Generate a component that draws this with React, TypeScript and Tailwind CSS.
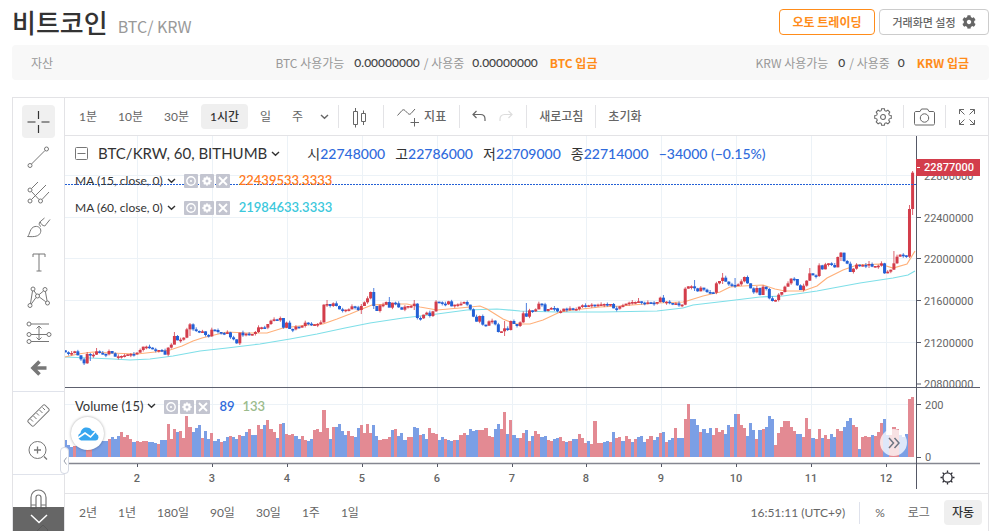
import React, { useState } from "react";
import { FaCog } from "react-icons/fa";

const RED = "#d33d4b";
const BLUE = "#2360d6";

// chart geometry
const FIRST_X = 65.4;
const LAST_X = 912.6;
const VOLUME_BASE = 457;

const barX = (i: number, count: number) => FIRST_X + (i * (LAST_X - FIRST_X)) / (count - 1);

const trace = (top: number, values: string) =>
  values.trim().split(/\s+/).map((v) => top + Number(v) / 3);

const closes = [
  ...trace(
    270,
    `247 250 249 244 256 268 280 252 254 254 244 249 252 253 243 250 260 259 258 256 253 252 253 248
    240 230 230 233 238 240 240 242 254 233 224 198 211 209 203 178 163 178 183 185 184 195 199 179
    180 186 189 190 187 202 208 220 188 196 191 193 192 186 172 172 173 162 152 148 151 144 173 158
    177 178 170 171 168 158 161 166 163 162 157 104 102 108 100 108 118 119 119 118 109 112 120 108
    97 85 66 108 123 106`
  ),
  ...trace(
    260,
    `134 126 143 128 130 142 149 140 138 138 131 174 175 164 158 168 154 125 127 131 133 124 139 134
    133 131 126 134 148 170 185 168 194 197 184 182 193 216 214 205 210 183 192 198 187 160 170 151
    154 148 131 133 153 147 144 145 154 154 146 148 145 148 147 140 136 137 136 134 135 134 133 132
    134 132 145 146 139 136 131 128 126 126 124 128 129 127 128 129 126 113 126 125 129 132 130 136
    134 86`
  ),
  ...trace(
    220,
    `199 199 205 214 203 209 216 217 218 190 183 173 185 193 195 198 193 184 171 190 205 217 204 225
    200 207 235 243 240 224 216 200 190 176 177 196 210 197 182 160 166 168 136 148 133 130 135 142
    111 98 123 131 156 146 134 138 135 136 132 140 138 137 130 160 155 149 130 110 104 106 110 -33
    -142`
  ),
];

// long wicks: [x, high, low]
const wicks = [
  [84, 358, 365], [90, 353, 361], [97, 348, 355], [175, 332, 344], [190, 323, 336], [240, 333, 345],
  [327, 300, 307], [361, 304, 314], [373, 288, 309], [389, 297, 306], [413, 300, 310], [504, 321, 336],
  [526, 303, 317], [640, 298, 303], [663, 295, 303], [695, 280, 291], [722, 273, 284], [735, 278, 288],
  [810, 268, 281], [841, 252, 261], [869, 261, 268], [894, 251, 270], [909.4, 205, 258], [912.6, 171, 215],
];

const volumes = `166b 180b 185b 184r 170b 165b 160b 160r 158r 165b 165b 168b 168b 168b 163r 156b 163b 153b
  141r 156r 150r 163r 171b 168r 171r 168r 168r 171b 171b 174b 178r 165b 165b 118r 163r 133r 141b 138r
  158r 92r 125r 141b 128b 121b 160r 139b 163b 145r 168b 163b 171r 168b 156b 153r 156b 161b 150r 153b
  141b 133r 150b 150b 121r 133r 121b 104r 133r 141r 160b 118r 115b 148r 150r 148r 153b 163b 153r 165r
  168b 163b 136r 133r 141r 75r 130r 163b 125r 126b 118b 138b 150b 138r 153r 156b 130b 121r 145r 118r
  145r 121b 153b 165r 163r 163r 156r 136b 133r 153b 145b 165b 156r 156r 125b 130b 150r 148b 163b 130r
  143r 148r 165b 156b 163r 165b 168b 165r 165b 150r 145r 150b 133b 138b 135b 135r 136r 130r 153r 156r
  133b 116b 133r 80r 148b 106r 150b 158b 158r 145r 136b 168r 153b 139r 148r 156b 153b 165r 168r 163b
  160b 156r 168r 171b 168r 163b 163b 148r 160r 174r 168b 178r 109r 174r 174r 171b 168b 171r 142b 158r
  156r 168b 153r 163r 171b 163r 156b 153b 171b 163r 153r 165b 156b 145r 142b 171r 165b 160b 130r 158b
  158b 101r 57r 103b 103b 119b 142r 133b 145b 130b 150r 130r 142r 136r 148b 119b 127r 86b 86r 121r
  130r 153b 113b 136b 163r 136b 133r 127b 92b 101b 180r 145r 125r 109r 109r 127r 139r 148b 146b 156r
  98r 133r 160b 163r 133r 160b 150r 163r 148b 156b 133r 139r 125b 107b 98b 121r 125r 192b 156r 154r
  156r 150b 154r 142r 113r 101b 150b 150r 127r 133r 150b 156b 148b 42r 36r`
  .split(/\s+/)
  .map((v) => ({ top: 385 + parseInt(v) / 3, up: v.endsWith("r") }));

const ma15 =
  "65,357 78,354 93,352 110,353 137,354 155,352 170,350 182,346 193,341 202,338 210,336 227,332 247,333 267,333 283,328 307,325 323,324 337,319 350,314 362,309 372,305 390,304 407,304 420,307 437,310 460,308 480,306 487,309 503,319 510,322 517,324 530,324 543,320 560,312 573,310 600,307 620,306 657,303 683,302 687,301 703,296 720,292 730,287 743,286 763,285 775,289 785,291 803,291 817,286 827,278 843,270 857,265 880,264 893,268 907,264 915,251";
const ma60 =
  "65,357 90,358 113,359 130,360 150,359 173,356 200,351 227,348 260,344 290,339 317,334 345,328 370,323 403,318 437,314 467,310 497,309 520,311 557,312 603,312 657,311 683,308 693,305 727,301 760,297 783,296 817,291 833,288 860,283 893,278 908,275 915,271";

const days = [2, 3, 4, 5, 6, 7, 8, 9, 10, 11, 12].map((d, i) => ({ label: d, x: Math.round(137 + i * 74.9) + 0.5 }));

const prices = [
  { label: "22800000", y: 175.5 },
  { label: "22400000", y: 217.5 },
  { label: "22000000", y: 258.5 },
  { label: "21600000", y: 300.5 },
  { label: "21200000", y: 342.5 },
  { label: "20800000", y: 384 },
];

function PriceChart() {
  return (
    <svg viewBox="65 136 923 357" className="block h-auto w-full" role="img" aria-label="BTC/KRW">
      <g stroke="#ecf2f7">
        {days.map((d) => (
          <line key={d.label} x1={d.x} x2={d.x} y1={136} y2={457} />
        ))}
        {prices.slice(0, 5).map((p) => (
          <line key={p.label} x1={65} x2={916} y1={p.y} y2={p.y} />
        ))}
        <line x1={65} x2={916} y1={404.5} y2={404.5} />
      </g>

      {/* volume */}
      <g shapeRendering="crispEdges">
        {volumes.map((v, i) => {
          const left = Math.max(65, Math.round(barX(i, volumes.length) - 1.5));
          const right = Math.round(barX(i + 1, volumes.length) - 1.5);
          return (
            <rect
              key={i}
              x={left}
              y={v.top}
              width={right - left}
              height={VOLUME_BASE - v.top}
              fill={v.up ? "#e38a93" : "#7b9fe5"}
            />
          );
        })}
      </g>

      <polyline points={ma60} fill="none" stroke="#7fdfe8" strokeWidth="1.2" />
      <polyline points={ma15} fill="none" stroke="#ffb07a" strokeWidth="1.2" />

      {/* candles */}
      {closes.map((close, i) => {
        const x = barX(i, closes.length);
        const open = i === 0 ? close - 2 : closes[i - 1];
        const color = close <= open ? RED : BLUE;
        const top = Math.min(open, close);
        const height = Math.max(1.6, Math.abs(open - close));
        const wick = wicks.find((w) => Math.abs(w[0] - x) < 1.55);
        const high = wick ? Math.min(wick[1], top) : top - ((i * 7) % 5) * 0.5;
        const low = wick ? wick[2] : top + height + ((i * 11) % 4) * 0.5;
        return (
          <g key={i} fill={color}>
            <rect x={x - 0.5} y={high} width={1} height={Math.max(0, low - high)} opacity={0.8} />
            <rect x={x - 1.5} y={top} width={3} height={height} />
          </g>
        );
      })}

      <line x1={65} x2={916} y1={184.5} y2={184.5} stroke={BLUE} strokeDasharray="2 1" />

      {/* axes */}
      <path d="M65 387.5H980" stroke="#5d606e" />
      <path d="M65 463.5H980" stroke="#858791" strokeWidth="1.4" />
      <path d="M916.5 136V489" stroke="#555866" />
      <g fontFamily="Roboto, sans-serif" fontSize="11" fill="#666">
        <clipPath id="price-pane">
          <rect x={917} y={136} width={70} height={251} />
        </clipPath>
        <g clipPath="url(#price-pane)">
          {prices.map((p) => (
            <g key={p.label}>
              <path d={`M917 ${p.y}h4`} stroke="#555866" />
              <text x={924} y={p.y + 4}>{p.label}</text>
            </g>
          ))}
        </g>
        <path d="M917 404.5h4M917 457.5h4" stroke="#555866" />
        <text x={925} y={409}>200</text>
        <text x={925} y={461}>0</text>
        {days.map((d) => (
          <g key={d.label}>
            <path d={`M${d.x} 464v3`} stroke="#555866" />
            <text x={d.x - 0.5} y={482} textAnchor="middle" fontWeight="500">{d.label}</text>
          </g>
        ))}
        <rect x={916} y={159} width={64} height={17} fill={RED} />
        <path d="M917 167.5h3" stroke="#fff" />
        <text x={924} y={171} fill="#fff" fontWeight="500">22877000</text>
      </g>

      {/* axis settings */}
      <g stroke="#2b2b33" fill="none" strokeWidth="1.3">
        <circle cx={947.5} cy={477.5} r={4.6} />
        <path d="M947.5 470.5v2M947.5 482.5v2M940.5 477.5h2M952.5 477.5h2M942.6 472.6l1.4 1.4M951 481l1.4 1.4M942.6 482.4l1.4-1.4M951 474l1.4-1.4" />
      </g>
    </svg>
  );
}

function Icon({ children, size = 28 }: { children: React.ReactNode; size?: number }) {
  return (
    <svg width={size} height={size} viewBox={`0 0 ${size} ${size}`} fill="none" stroke="currentColor" aria-hidden="true">
      {children}
    </svg>
  );
}

function Chevron({ className = "" }: { className?: string }) {
  return (
    <svg width="9" height="6" viewBox="0 0 9 6" fill="none" stroke="currentColor" strokeWidth="1.4" className={className} aria-hidden="true">
      <path d="M1 1l3.5 3.3L8 1" />
    </svg>
  );
}

const gearPath =
  "M8.4 1.5h3.2l.5 2.3 1.5.6 2-1.2 2.2 2.2-1.2 2 .6 1.5 2.3.5v3.2l-2.3.5-.6 1.5 1.2 2-2.2 2.2-2-1.2-1.5.6-.5 2.3H8.4l-.5-2.3-1.5-.6-2 1.2-2.2-2.2 1.2-2-.6-1.5-2.3-.5V9.4l2.3-.5.6-1.5-1.2-2 2.2-2.2 2 1.2 1.5-.6z";

const drawTools = [
  {
    name: "추세선",
    icon: <><circle cx="5" cy="22.500" r="2" /><circle cx="21.500" cy="6" r="2" /><path d="M6.500 21L20 7.500" /></>,
  },
  {
    name: "피치포크",
    icon: <><circle cx="5" cy="12" r="2" /><circle cx="5" cy="23" r="2" /><circle cx="15.500" cy="23" r="2" /><path d="M6.500 10.500L13 4M6.500 21.500L21 7M17 21.500l7-7.500M6.500 13.500l7.500 8" /></>,
  },
  {
    name: "브러시",
    icon: <><path d="M2.500 23.500c2.500-1.500 2-9 7.500-10 4-.7 6.800 2.500 5.500 6-1.500 4-6 4.500-13 4z" /><path d="M16 13.500c-2-1-2.500-3-.8-4.800M15.200 8.700c1 2.800 2 3.800 4.600 4.300L25 6.500M15.200 8.700L19.500 5" /></>,
  },
  {
    name: "텍스트",
    icon: <path d="M8 9V6h12v3M14 6v17M11.500 23h5" />,
  },
  {
    name: "패턴",
    icon: <><circle cx="8" cy="6" r="2" /><circle cx="20" cy="6.500" r="2" /><circle cx="5" cy="22.500" r="2" /><circle cx="22.500" cy="20" r="2" /><circle cx="12.500" cy="13" r="2" /><path d="M7.500 8L5.500 20.500M9 7.800l2.500 3.500M18.500 8L14 11.700M20.400 8.500l1.700 9.500M14.300 14l6.500 4.800M11 14.500l-4.700 6.500" /></>,
  },
  {
    name: "예측 도구",
    icon: <><circle cx="4" cy="6" r="2" /><circle cx="4" cy="16.500" r="2" /><circle cx="24" cy="16.500" r="2" /><circle cx="4" cy="23.500" r="2" /><path d="M6 6h18M6 16.500h16M6 23.500h18M14 8v14M11.500 10.500L14 8l2.500 2.500M11.500 19.500L14 22l2.500-2.500" /></>,
  },
];

const legendIcons = [
  { name: "숨기기", icon: <><circle cx="7" cy="7" r="4.200" /><circle cx="7" cy="7" r="1" fill="#fff" stroke="none" /></> },
  { name: "설정", icon: <><circle cx="7" cy="7" r="2.600" strokeWidth="2.200" /><path d="M7 2.200v2M7 9.800v2M2.200 7h2M9.800 7h2M3.800 3.800l1 1M9.200 9.200l1 1M3.800 10.200l1-1M9.200 4.800l1-1" /></> },
  { name: "삭제", icon: <path d="M3 3l8 8M11 3l-8 8" strokeWidth="1.800" /> },
];

function LegendRow({ title, children }: { title: React.ReactNode; children: React.ReactNode }) {
  return (
    <div className="flex h-[27px] items-center">
      <button className="flex items-center gap-1 text-xs text-[#333]">
        {title}
        <Chevron />
      </button>
      <div className="ml-2 mr-[9px] flex gap-[2px]">
        {legendIcons.map((l) => (
          <button key={l.name} aria-label={l.name} className="size-[14px] rounded-[1px] bg-[#c3c5d0]">
            <svg width="14" height="14" viewBox="0 0 14 14" fill="none" stroke="#fff" strokeWidth="1.400">{l.icon}</svg>
          </button>
        ))}
      </div>
      {children}
    </div>
  );
}

function Divider() {
  return <span className="h-[23px] w-px shrink-0 bg-[#e3e3e6]" />;
}

export default function App() {
  const [interval, setInterval] = useState("1시간");
  const intervals = ["1분", "10분", "30분", "1시간", "일", "주"];
  const ranges = ["2년", "1년", "180일", "90일", "30일", "1주", "1일"];
  const ohlc = [
    ["시", "22748000"],
    ["고", "22786000"],
    ["저", "22709000"],
    ["종", "22714000"],
  ];

  return (
    <main className="bg-white pl-3 pr-[11px] font-['Noto_Sans_CJK_KR',sans-serif] text-[#666]">
      {/* HEADER */}
      <header className="flex h-[45px] items-start justify-between pt-[9px]">
        <h1 className="flex items-baseline gap-[10px] text-[26px] font-medium leading-[26px] text-[#333]">
          비트코인
          <span className="text-base font-normal text-[#999]">BTC/ KRW</span>
        </h1>
        <div className="flex gap-1 text-xs">
          <button className="h-[26px] w-24 rounded border border-[#ff8c1a] font-bold text-[#ff8c1a]">
            오토 트레이딩
          </button>
          <button className="flex h-[26px] w-[110px] items-center justify-center gap-[6px] rounded border border-[#ccc] text-[11px] font-medium">
            거래화면 설정
            <FaCog className="text-sm" />
          </button>
        </div>
      </header>

      {/* ASSETS */}
      <section className="flex h-[35px] items-center rounded bg-[#f8f8f8] pl-[19px] pr-5 pt-px text-xs text-[#999]">
        <span>자산</span>
        <div className="ml-auto flex items-center">
          <span>BTC 사용가능</span>
          <span className="ml-[10px] font-[Lato,sans-serif] font-medium text-[#444]">0.00000000</span>
          <span className="ml-1">/ 사용중</span>
          <span className="ml-2 font-[Lato,sans-serif] font-medium text-[#444]">0.00000000</span>
          <a href="#btc" className="ml-3 font-bold text-[#ff8c1a]">BTC 입금</a>
        </div>
        <div className="ml-[158px] flex items-center">
          <span>KRW 사용가능</span>
          <span className="ml-[10px] font-[Lato,sans-serif] font-medium text-[#444]">0</span>
          <span className="ml-1">/ 사용중</span>
          <span className="ml-2 font-[Lato,sans-serif] font-medium text-[#444]">0</span>
          <a href="#krw" className="ml-3 font-bold text-[#ff8c1a]">KRW 입금</a>
        </div>
      </section>

      {/* CHART */}
      <section className="mt-[17px] flex border border-b-0 border-[#e3e3e6] font-[Lato,'Noto_Sans_CJK_KR',sans-serif]">
        <aside className="relative w-[52px] shrink-0 overflow-hidden border-r border-[#e3e3e6] text-[#777] [contain:size]">
          <div className="flex flex-col items-center border-b border-[#e0e3eb] pb-[7px] pt-[6px]">
            <button aria-label="십자선" className="my-px flex size-[33px] items-center justify-center rounded bg-[#f0f0f0] text-[#333]">
              <Icon>
                <path d="M13.500 3v8M13.500 17v8M2.500 14h8M16.500 14h8" strokeWidth="1.200" />
              </Icon>
            </button>
            {drawTools.map((t) => (
              <button key={t.name} aria-label={t.name} className="flex h-[35px] items-center">
                <Icon>{t.icon}</Icon>
              </button>
            ))}
            <button aria-label="뒤로" className="flex h-[35px] items-center">
              <Icon>
                <path d="M21.500 15H8.500M14.500 8.500L8 15l6.500 6.500" strokeWidth="3.600" />
              </Icon>
            </button>
          </div>
          <div className="flex flex-col items-center border-b border-[#e0e3eb] py-[6px]">
            <button aria-label="측정" className="flex h-[35px] items-center">
              <Icon>
                <rect x="1.500" y="9.500" width="24" height="8" rx="1.500" transform="rotate(-45 13.5 13.5)" />
                <path d="M5.500 17l2.500 2.500M8.500 14l3 3M11.500 11l2.500 2.500M14.500 8l3 3M17.500 5.500L20 8" />
              </Icon>
            </button>
            <button aria-label="확대" className="flex h-[35px] items-center">
              <Icon>
                <circle cx="12.500" cy="13" r="8.500" />
                <path d="M19 19.500l3 3M12.500 9.500v7M9 13h7" strokeWidth="1.300" />
              </Icon>
            </button>
          </div>
          <div className="flex flex-col items-center py-[6px]">
            <button aria-label="자석" className="flex h-[35px] items-center">
              <Icon>
                <path d="M6 23.500V12.500a7.500 7.500 0 0 1 15 0v11h-5V12.500a2.500 2.500 0 0 0-5 0v11zM6 20h5M16 20h5" strokeWidth="1.200" />
              </Icon>
            </button>
            <button aria-label="그리기 유지" className="flex h-[35px] items-center">
              <Icon>
                <path d="M4 24l2-7L18 5l5 5-12 12z" />
              </Icon>
            </button>
          </div>
          <button aria-label="더 보기" className="absolute inset-x-0 bottom-0 flex h-6 items-center justify-center bg-[#555]/90 text-white">
            <svg width="18" height="10" viewBox="0 0 18 10" fill="none" stroke="currentColor" strokeWidth="1.500"><path d="M1 1l8 7.500L17 1" /></svg>
          </button>
        </aside>

        <div className="relative min-w-0 flex-1">
          <nav className="flex h-[38px] items-center border-b border-[#e3e3e6] pl-[5px] pr-[9px] text-xs">
            <div className="flex items-center gap-[3px]">
              {intervals.map((t) => (
                <button
                  key={t}
                  onClick={() => setInterval(t)}
                  className={`h-[25px] rounded-sm px-[9px] ${t === interval ? "bg-[#efefef] font-medium text-[#333]" : ""}`}
                >
                  {t}
                </button>
              ))}
              <button aria-label="시간 간격" className="px-[5px]"><Chevron /></button>
            </div>
            <span className="w-1" />
            <Divider />
            <button aria-label="차트 종류" className="px-[10px]">
              <Icon size={24}>
                <path d="M4.500 6.500h4v13h-4zM6.500 3v3.500M6.500 19.500v3M12.500 8.500h4v8h-4zM14.500 5.500v3M14.500 16.500v3.500" />
              </Icon>
            </button>
            <Divider />
            <button className="flex items-center gap-[5px] px-[13px]">
              <svg width="22" height="20" viewBox="0 0 22 20" fill="none" stroke="currentColor" aria-hidden="true">
                <path d="M.5 8.500l4.500-5c1-1 2-1 3 0l3 3c1 1 2 1 3 0l4-4.500M17.500 11v8.500M13.500 15.500H22" />
              </svg>
              <span className="font-medium">지표</span>
            </button>
            <Divider />
            <button aria-label="실행 취소" className="pl-3 pr-[7px]">
              <svg width="14" height="14" viewBox="0 0 14 14" fill="none" stroke="currentColor" strokeWidth="1.200"><path d="M4.500 1L1 4.500 4.500 8M1 4.500h7.500c3 0 4.500 2 4.500 4.500v2" /></svg>
            </button>
            <button aria-label="다시 실행" className="pl-[6px] pr-[13px] text-[#ddd]">
              <svg width="14" height="14" viewBox="0 0 14 14" fill="none" stroke="currentColor" strokeWidth="1.200"><path d="M9.500 1L13 4.500 9.500 8M13 4.500H5.500C2.500 4.500 1 6.500 1 9v2" /></svg>
            </button>
            <Divider />
            <button className="px-3 font-medium">새로고침</button>
            <Divider />
            <button className="px-3 font-medium">초기화</button>
            <div className="ml-auto flex items-center">
              <button aria-label="설정" className="px-[10px]">
                <svg width="20" height="20" viewBox="-.5 -.5 21 23" fill="none" stroke="currentColor" strokeWidth="1.200"><path d={gearPath} /><circle cx="10" cy="11" r="2.800" /></svg>
              </button>
              <Divider />
              <button aria-label="스냅샷" className="px-[10px]">
                <svg width="21" height="18" viewBox="0 0 21 18" fill="none" stroke="currentColor"><path d="M2 3.500h4l1.500-2.500h6L15 3.500h4c1 0 1.500.5 1.500 1.500v10.500c0 1-.5 1.500-1.500 1.500H2C1 17 .5 16.500.5 15.500V5C.5 4 1 3.500 2 3.500z" /><circle cx="10.500" cy="10" r="4.200" /></svg>
              </button>
              <Divider />
              <button aria-label="전체 화면" className="pl-3 pr-[3px]">
                <svg width="18" height="18" viewBox="0 0 18 18" fill="none" stroke="currentColor"><path d="M1.500 6V1.500H6M1.500 1.500L6.500 6.500M12 1.500h4.500V6M16.500 1.500L11.500 6.500M1.500 12v4.500H6M1.500 16.500L6.500 11.500M12 16.500h4.500V12M16.500 16.500L11.500 11.500" /></svg>
              </button>
            </div>
          </nav>

          <div className="relative">
            <PriceChart />

            <div className="absolute left-[10px] top-1">
              <div className="flex h-[27px] items-center">
                <button className="flex items-center gap-1 text-[15px] text-[#333]">
                  <svg width="13" height="13" viewBox="0 0 13 13" fill="none" stroke="#777" className="mr-[6px]"><rect x=".5" y=".5" width="12" height="12" rx="1" /><path d="M2.500 6.500h8" /></svg>
                  BTC/KRW, 60, BITHUMB
                  <Chevron />
                </button>
                <div className="ml-[27px] flex gap-[10px] text-sm font-medium text-[#2f6bdc]">
                  {ohlc.map(([label, value]) => (
                    <span key={label}>
                      <span className="font-normal text-[#333]">{label}</span>
                      {value}
                    </span>
                  ))}
                  <span>−34000 (−0.15%)</span>
                </div>
              </div>
              <LegendRow title="MA (15, close, 0)">
                <span className="text-[13px] font-semibold text-[#ff7b1f]">22439533.3333</span>
              </LegendRow>
              <LegendRow title="MA (60, close, 0)">
                <span className="text-[13px] font-semibold text-[#3cc8dc]">21984633.3333</span>
              </LegendRow>
            </div>

            <div className="absolute bottom-[73px] left-[10px]">
              <LegendRow title={<span className="text-[13px]">Volume (15)</span>}>
                <span className="text-[13px] font-semibold text-[#2f6bdc]">89</span>
                <span className="ml-2 text-[13px] font-semibold text-[#9bbb8c]">133</span>
              </LegendRow>
            </div>

            <a href="#chart" aria-label="차트 제공" className="absolute bottom-[43px] left-[6px] flex size-[33px] items-center justify-center rounded-full bg-white shadow-[0_0_3px_rgba(0,0,0,0.35)]">
              <svg width="22" height="14" viewBox="0 0 22 14" aria-hidden="true">
                <path d="M4 13.500A4 4 0 0 1 3.500 6C4 2.500 6.500.5 9.500.5c2.500 0 4.300 1 5.500 3.200 2.500-.2 4.200 1.300 4.500 3.300a3.400 3.400 0 0 1-1 6.500z" fill="#37a6ef" />
                <path d="M1 11l7-5 5.500 4 5.500-6" fill="none" stroke="#fff" strokeWidth="1.600" />
              </svg>
            </a>
            <button aria-label="최신으로" className="absolute bottom-[37px] right-[81px] flex size-[27px] items-center justify-center rounded-full bg-white/75 text-[#6e7683]">
              <svg width="12" height="12" viewBox="0 0 12 12" fill="none" stroke="currentColor" strokeWidth="1.500"><path d="M1 1l4.500 5L1 11M6.500 1L11 6l-4.500 5" /></svg>
            </button>
            <button aria-label="도구 숨기기" className="absolute -left-[5px] bottom-[19px] flex h-[27px] w-[9px] items-center justify-center rounded border border-[#d5d9e4] bg-white text-[#9aa0ad]">
              <svg width="4" height="8" viewBox="0 0 4 8" fill="none" stroke="currentColor"><path d="M3.500.5L1 4l2.500 3.500" /></svg>
            </button>
          </div>

          <footer className="flex h-[38px] items-center border-t border-[#e3e3e6] pl-[14px] pr-[6px] text-xs">
            <div className="flex gap-[21px]">
              {ranges.map((r) => (
                <button key={r}>{r}</button>
              ))}
            </div>
            <span className="ml-auto mr-[14px]">16:51:11 (UTC+9)</span>
            <span className="h-[22px] w-px bg-[#dfe2ec]" />
            <button className="px-[15px]">%</button>
            <button className="px-2">로그</button>
            <button className="ml-[6px] h-[25px] rounded-sm bg-[#efefef] px-2 font-medium text-[#333]">자동</button>
          </footer>
        </div>
      </section>
    </main>
  );
}
